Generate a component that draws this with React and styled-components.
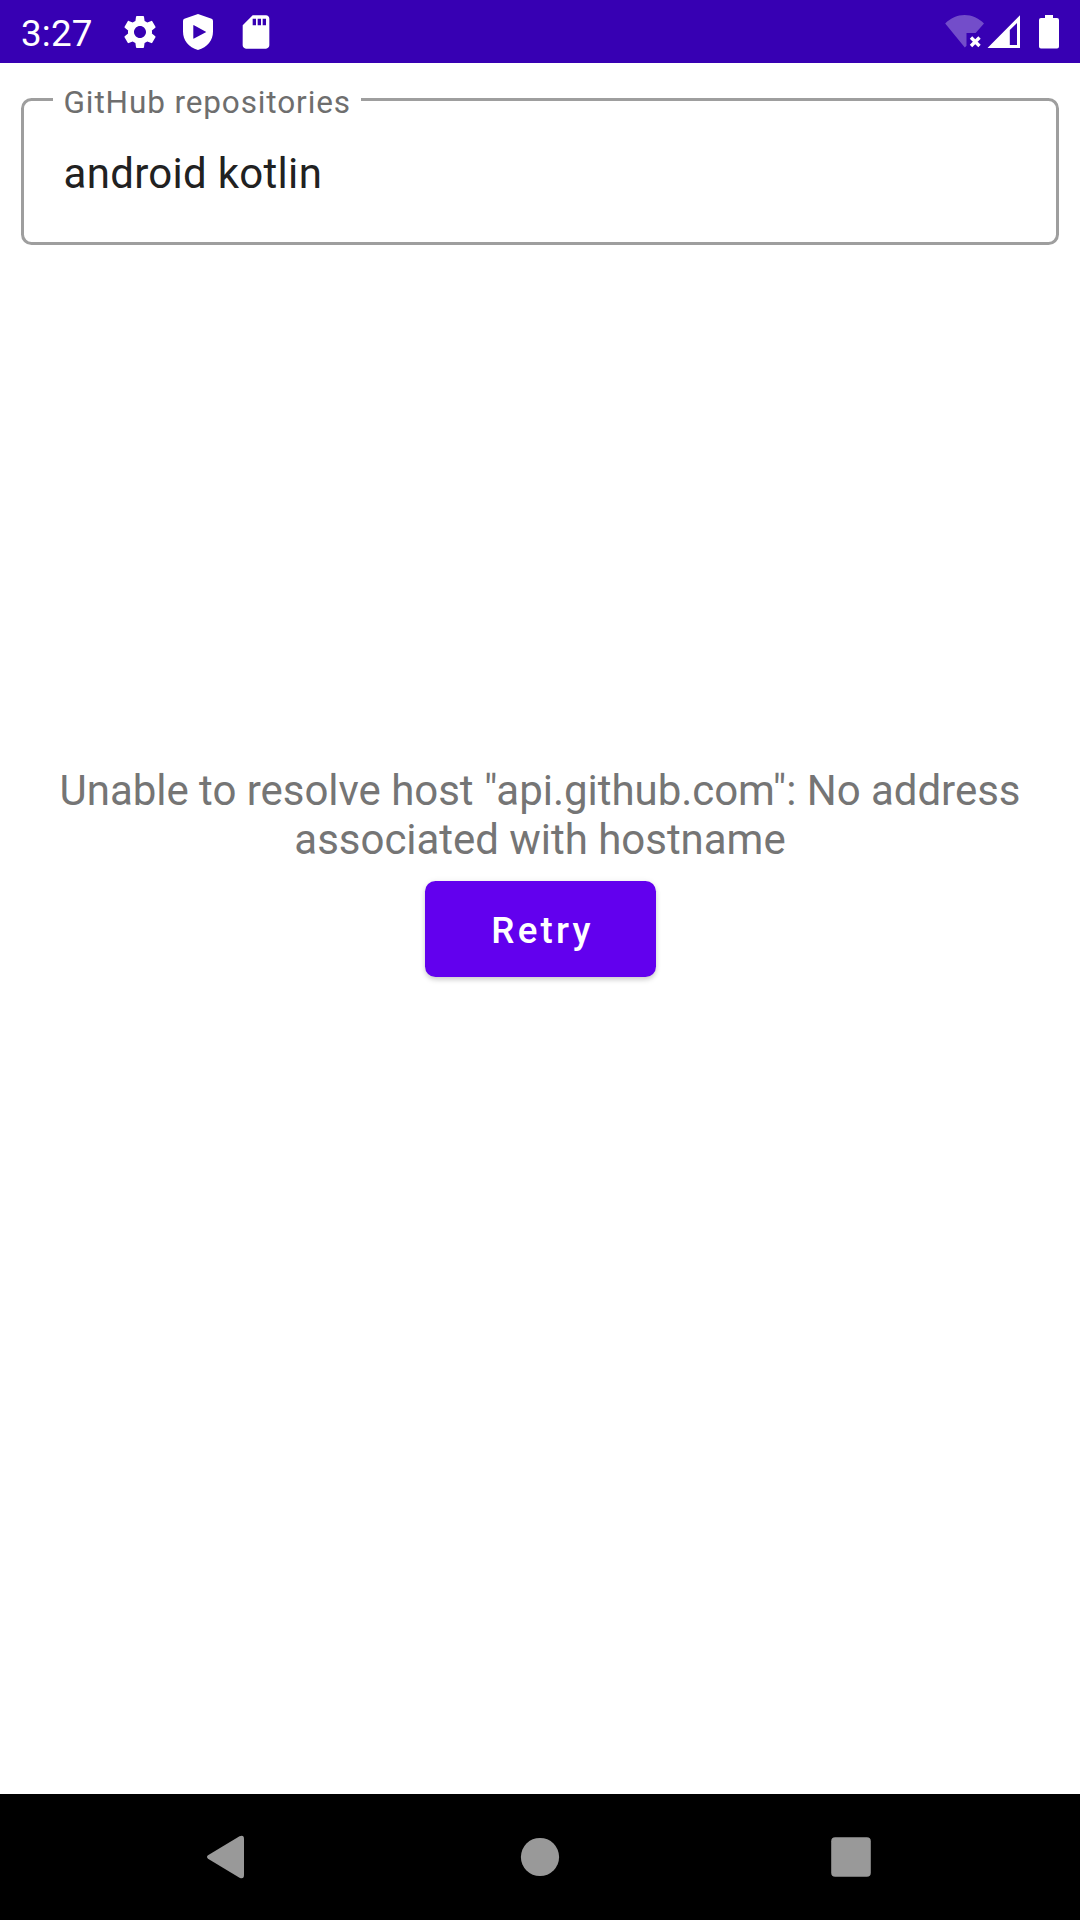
import React from "react";
import styled, { createGlobalStyle } from "styled-components";
import { MdSettings, MdSdCard } from "react-icons/md";

const GlobalStyle = createGlobalStyle`
  *, *::before, *::after { box-sizing: border-box; }
  body {
    margin: 0;
    background: #fff;
    font-family: Roboto, "Noto Sans", sans-serif;
  }
`;

const Screen = styled.div`
  width: 1080px;
  height: 1920px;
  display: flex;
  flex-direction: column;
  background: #fff;
`;

const StatusBar = styled.header`
  flex: 0 0 63px;
  display: flex;
  align-items: center;
  justify-content: space-between;
  padding: 0 21px;
  background: #3700b3;
  color: #fff;
`;

const StatusGroup = styled.div`
  height: 63px;
  display: flex;
  align-items: center;
  gap: ${(p) => p.$gap}px;
`;

const Clock = styled.time`
  width: 81px;
  font-size: 36.75px;
  line-height: 43px;
  padding-top: 3px;
  letter-spacing: 0.2px;
`;

const IconSvg = styled.svg`
  display: block;
  flex: none;
`;

const Battery = styled(IconSvg)`
  margin-left: 16.5px;
`;

const Content = styled.main`
  flex: 1;
  display: flex;
  flex-direction: column;
  padding: 21px 21px 0;
`;

const OutlinedField = styled.fieldset`
  height: 161px;
  margin: 0;
  padding: 0 39.5px;
  border: 3px solid #9e9e9e;
  border-radius: 10.5px;
`;

const FieldLabel = styled.legend`
  height: 31px;
  margin-inline-start: -10.5px;
  padding: 0 10.5px;
  font-size: 31.5px;
  line-height: 37px;
  letter-spacing: 0.88px;
  color: #6e6e6e;
`;

const FieldInput = styled.input`
  display: block;
  width: 100%;
  height: 50px;
  margin-top: 34px;
  padding: 0;
  border: 0;
  outline: 0;
  background: transparent;
  font: 400 42px/50px Roboto, "Noto Sans", sans-serif;
  letter-spacing: 0.3px;
  color: #212121;
`;

const ErrorState = styled.section`
  display: flex;
  flex-direction: column;
  align-items: center;
  margin-top: 521px;
`;

const ErrorMessage = styled.p`
  margin: 0;
  width: 1000px;
  font-size: 42px;
  line-height: 49px;
  letter-spacing: -0.03px;
  text-align: center;
  color: #757575;
`;

const RetryButton = styled.button`
  width: 231px;
  height: 96px;
  margin-top: 17px;
  padding: 2px 0 0 5px;
  border: 0;
  border-radius: 10.5px;
  background: #6200ee;
  box-shadow: 0 3px 5px rgba(0, 0, 0, 0.17), 0 0 6px rgba(0, 0, 0, 0.06);
  font: 500 36.75px/43px Roboto, "Noto Sans", sans-serif;
  letter-spacing: 3.2px;
  color: #fff;
`;

const NavBar = styled.nav`
  flex: 0 0 126px;
  display: flex;
  align-items: center;
  justify-content: space-between;
  padding: 0 209px 0 206px;
  background: #000;
`;

const NavButton = styled.button`
  display: flex;
  padding: 0;
  border: 0;
  background: none;
  color: #999;
`;

const PlayShield = () => (
  <IconSvg width="40" height="40" viewBox="0 0 40 40" fill="currentColor">
    <path
      fillRule="evenodd"
      d="M20 2L33.6 6.8Q35 7.4 35 9V19.5C35 28 29.5 35.5 20 38C10.500 35.5 5 28 5 19.5V9Q5 7.400 6.400 6.800ZM15.300 13.800V26.300Q15.300 27 16 26.600L28.300 20L16 13.200Q15.300 12.800 15.300 13.800Z"
    />
  </IconSvg>
);

const WifiOff = () => (
  <IconSvg width="40" height="36" viewBox="0 0 40 36" fill="currentColor">
    <path
      fillOpacity=".3"
      d="M0.200 9.500C5.500 4.200 12.300 1 19.600 1S33.700 4.200 39 9.500L30.600 19H21.500V31.700L19.800 33.500Z"
    />
    <path d="M26 23.500L34.500 32M34.500 23.500L26 32" stroke="currentColor" strokeWidth="3.4" fill="none" />
  </IconSvg>
);

const CellSignal = () => (
  <IconSvg width="34" height="36" viewBox="0 0 34 36" fill="currentColor">
    <path fillRule="evenodd" d="M0.500 34L33 1.300V34ZM22.800 16V31H30V9Z" />
  </IconSvg>
);

export default function App() {
  return (
    <>
      <GlobalStyle />
      <Screen>
        <StatusBar>
          <StatusGroup $gap={18}>
            <Clock>3:27</Clock>
            <MdSettings size={40} />
            <PlayShield />
            <MdSdCard size={40} />
          </StatusGroup>
          <StatusGroup $gap={2}>
            <WifiOff />
            <CellSignal />
            <Battery width="20" height="34" viewBox="0 0 20 34" fill="currentColor">
              <path d="M6 0H14V3H18Q20 3 20 5V31.500Q20 33.500 18 33.500H2Q0 33.500 0 31.500V5Q0 3 2 3H6Z" />
            </Battery>
          </StatusGroup>
        </StatusBar>

        <Content>
          <OutlinedField>
            <FieldLabel>GitHub repositories</FieldLabel>
            <FieldInput defaultValue="android kotlin" aria-label="GitHub repositories" />
          </OutlinedField>

          <ErrorState>
            <ErrorMessage>
              Unable to resolve host "api.github.com": No address associated with hostname
            </ErrorMessage>
            <RetryButton type="button">Retry</RetryButton>
          </ErrorState>
        </Content>

        <NavBar>
          <NavButton aria-label="Back">
            <IconSvg width="43" height="44" viewBox="0 0 43 44" fill="currentColor">
              <path d="M2 20.300L33.500 1.300Q38 -0.500 38 4V40Q38 44.500 33.500 42.700L2 23.700Q0 22 2 20.300Z" />
            </IconSvg>
          </NavButton>
          <NavButton aria-label="Home">
            <IconSvg width="40" height="40" viewBox="0 0 40 40" fill="currentColor">
              <circle cx="20" cy="20" r="19.100" />
            </IconSvg>
          </NavButton>
          <NavButton aria-label="Recent apps">
            <IconSvg width="40" height="40" viewBox="0 0 40 40" fill="currentColor">
              <rect x="0.200" y="0.200" width="39.600" height="39.600" rx="4" />
            </IconSvg>
          </NavButton>
        </NavBar>
      </Screen>
    </>
  );
}
